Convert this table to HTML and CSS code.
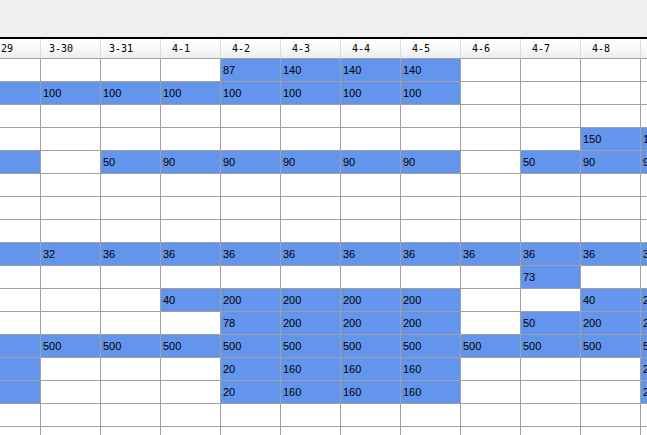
FILE: index.html
```html
<!DOCTYPE html>
<html>
<head>
<meta charset="utf-8">
<link rel="stylesheet" href="styles.css">
</head>
<body>
<div class="topbar"></div>
<div class="viewport">
  <div class="grid">
    <div class="row head">
      <div class="h"><span>3-29</span></div><div class="h"><span>3-30</span></div><div class="h"><span>3-31</span></div><div class="h"><span>4-1</span></div><div class="h"><span>4-2</span></div><div class="h"><span>4-3</span></div><div class="h"><span>4-4</span></div><div class="h"><span>4-5</span></div><div class="h"><span>4-6</span></div><div class="h"><span>4-7</span></div><div class="h"><span>4-8</span></div><div class="h"><span>4-9</span></div>
    </div>
    <div class="row">
      <div class="c"></div><div class="c"></div><div class="c"></div><div class="c"></div><div class="c b">87</div><div class="c b">140</div><div class="c b">140</div><div class="c b">140</div><div class="c"></div><div class="c"></div><div class="c"></div><div class="c"></div>
    </div>
    <div class="row">
      <div class="c b"></div><div class="c b">100</div><div class="c b">100</div><div class="c b">100</div><div class="c b">100</div><div class="c b">100</div><div class="c b">100</div><div class="c b">100</div><div class="c"></div><div class="c"></div><div class="c"></div><div class="c"></div>
    </div>
    <div class="row">
      <div class="c"></div><div class="c"></div><div class="c"></div><div class="c"></div><div class="c"></div><div class="c"></div><div class="c"></div><div class="c"></div><div class="c"></div><div class="c"></div><div class="c"></div><div class="c"></div>
    </div>
    <div class="row">
      <div class="c"></div><div class="c"></div><div class="c"></div><div class="c"></div><div class="c"></div><div class="c"></div><div class="c"></div><div class="c"></div><div class="c"></div><div class="c"></div><div class="c b">150</div><div class="c b">150</div>
    </div>
    <div class="row">
      <div class="c b"></div><div class="c"></div><div class="c b">50</div><div class="c b">90</div><div class="c b">90</div><div class="c b">90</div><div class="c b">90</div><div class="c b">90</div><div class="c"></div><div class="c b">50</div><div class="c b">90</div><div class="c b">90</div>
    </div>
    <div class="row">
      <div class="c"></div><div class="c"></div><div class="c"></div><div class="c"></div><div class="c"></div><div class="c"></div><div class="c"></div><div class="c"></div><div class="c"></div><div class="c"></div><div class="c"></div><div class="c"></div>
    </div>
    <div class="row">
      <div class="c"></div><div class="c"></div><div class="c"></div><div class="c"></div><div class="c"></div><div class="c"></div><div class="c"></div><div class="c"></div><div class="c"></div><div class="c"></div><div class="c"></div><div class="c"></div>
    </div>
    <div class="row">
      <div class="c"></div><div class="c"></div><div class="c"></div><div class="c"></div><div class="c"></div><div class="c"></div><div class="c"></div><div class="c"></div><div class="c"></div><div class="c"></div><div class="c"></div><div class="c"></div>
    </div>
    <div class="row">
      <div class="c b"></div><div class="c b">32</div><div class="c b">36</div><div class="c b">36</div><div class="c b">36</div><div class="c b">36</div><div class="c b">36</div><div class="c b">36</div><div class="c b">36</div><div class="c b">36</div><div class="c b">36</div><div class="c b">36</div>
    </div>
    <div class="row">
      <div class="c"></div><div class="c"></div><div class="c"></div><div class="c"></div><div class="c"></div><div class="c"></div><div class="c"></div><div class="c"></div><div class="c"></div><div class="c b">73</div><div class="c"></div><div class="c"></div>
    </div>
    <div class="row">
      <div class="c"></div><div class="c"></div><div class="c"></div><div class="c b">40</div><div class="c b">200</div><div class="c b">200</div><div class="c b">200</div><div class="c b">200</div><div class="c"></div><div class="c"></div><div class="c b">40</div><div class="c b">200</div>
    </div>
    <div class="row">
      <div class="c"></div><div class="c"></div><div class="c"></div><div class="c"></div><div class="c b">78</div><div class="c b">200</div><div class="c b">200</div><div class="c b">200</div><div class="c"></div><div class="c b">50</div><div class="c b">200</div><div class="c b">200</div>
    </div>
    <div class="row">
      <div class="c b"></div><div class="c b">500</div><div class="c b">500</div><div class="c b">500</div><div class="c b">500</div><div class="c b">500</div><div class="c b">500</div><div class="c b">500</div><div class="c b">500</div><div class="c b">500</div><div class="c b">500</div><div class="c b">500</div>
    </div>
    <div class="row">
      <div class="c b"></div><div class="c"></div><div class="c"></div><div class="c"></div><div class="c b">20</div><div class="c b">160</div><div class="c b">160</div><div class="c b">160</div><div class="c"></div><div class="c"></div><div class="c"></div><div class="c b">20</div>
    </div>
    <div class="row">
      <div class="c b"></div><div class="c"></div><div class="c"></div><div class="c"></div><div class="c b">20</div><div class="c b">160</div><div class="c b">160</div><div class="c b">160</div><div class="c"></div><div class="c"></div><div class="c"></div><div class="c b">20</div>
    </div>
    <div class="row">
      <div class="c"></div><div class="c"></div><div class="c"></div><div class="c"></div><div class="c"></div><div class="c"></div><div class="c"></div><div class="c"></div><div class="c"></div><div class="c"></div><div class="c"></div><div class="c"></div>
    </div>
    <div class="row">
      <div class="c"></div><div class="c"></div><div class="c"></div><div class="c"></div><div class="c"></div><div class="c"></div><div class="c"></div><div class="c"></div><div class="c"></div><div class="c"></div><div class="c"></div><div class="c"></div>
    </div>
  </div>
</div>
</body>
</html>
```

FILE: styles.css
```css
html, body {
  margin: 0;
  padding: 0;
  background: #ffffff;
  overflow: hidden;
}
.topbar {
  height: 37px;
  background: #f0f0f0;
  border-bottom: 2px solid #000000;
}
.viewport {
  overflow: hidden;
  width: 647px;
  height: 396px;
}
.grid {
  margin-left: -19px;
  width: 720px;
}
.row {
  display: grid;
  grid-template-columns: repeat(12, 60px);
}
.h {
  height: 20px;
  box-sizing: border-box;
  border-right: 1px solid #dcdcdc;
  border-bottom: 1px solid #a0a0a0;
  background: linear-gradient(#ffffff 0%, #fafafa 45%, #ececec 100%);
  font-family: "DejaVu Sans Mono", "Liberation Mono", monospace;
  font-size: 10px;
  line-height: 19px;
  color: #000000;
  white-space: nowrap;
}
.h span {
  display: inline-block;
  width: 40px;
  text-align: center;
}
.c {
  height: 23px;
  box-sizing: border-box;
  border-right: 1px solid #a0a0a0;
  border-bottom: 1px solid #a0a0a0;
  padding-left: 2px;
  font-family: "Liberation Sans", Arial, sans-serif;
  font-size: 11px;
  line-height: 22px;
  color: #000000;
  white-space: nowrap;
  overflow: hidden;
}
.b {
  background: #6495ed;
}
```
